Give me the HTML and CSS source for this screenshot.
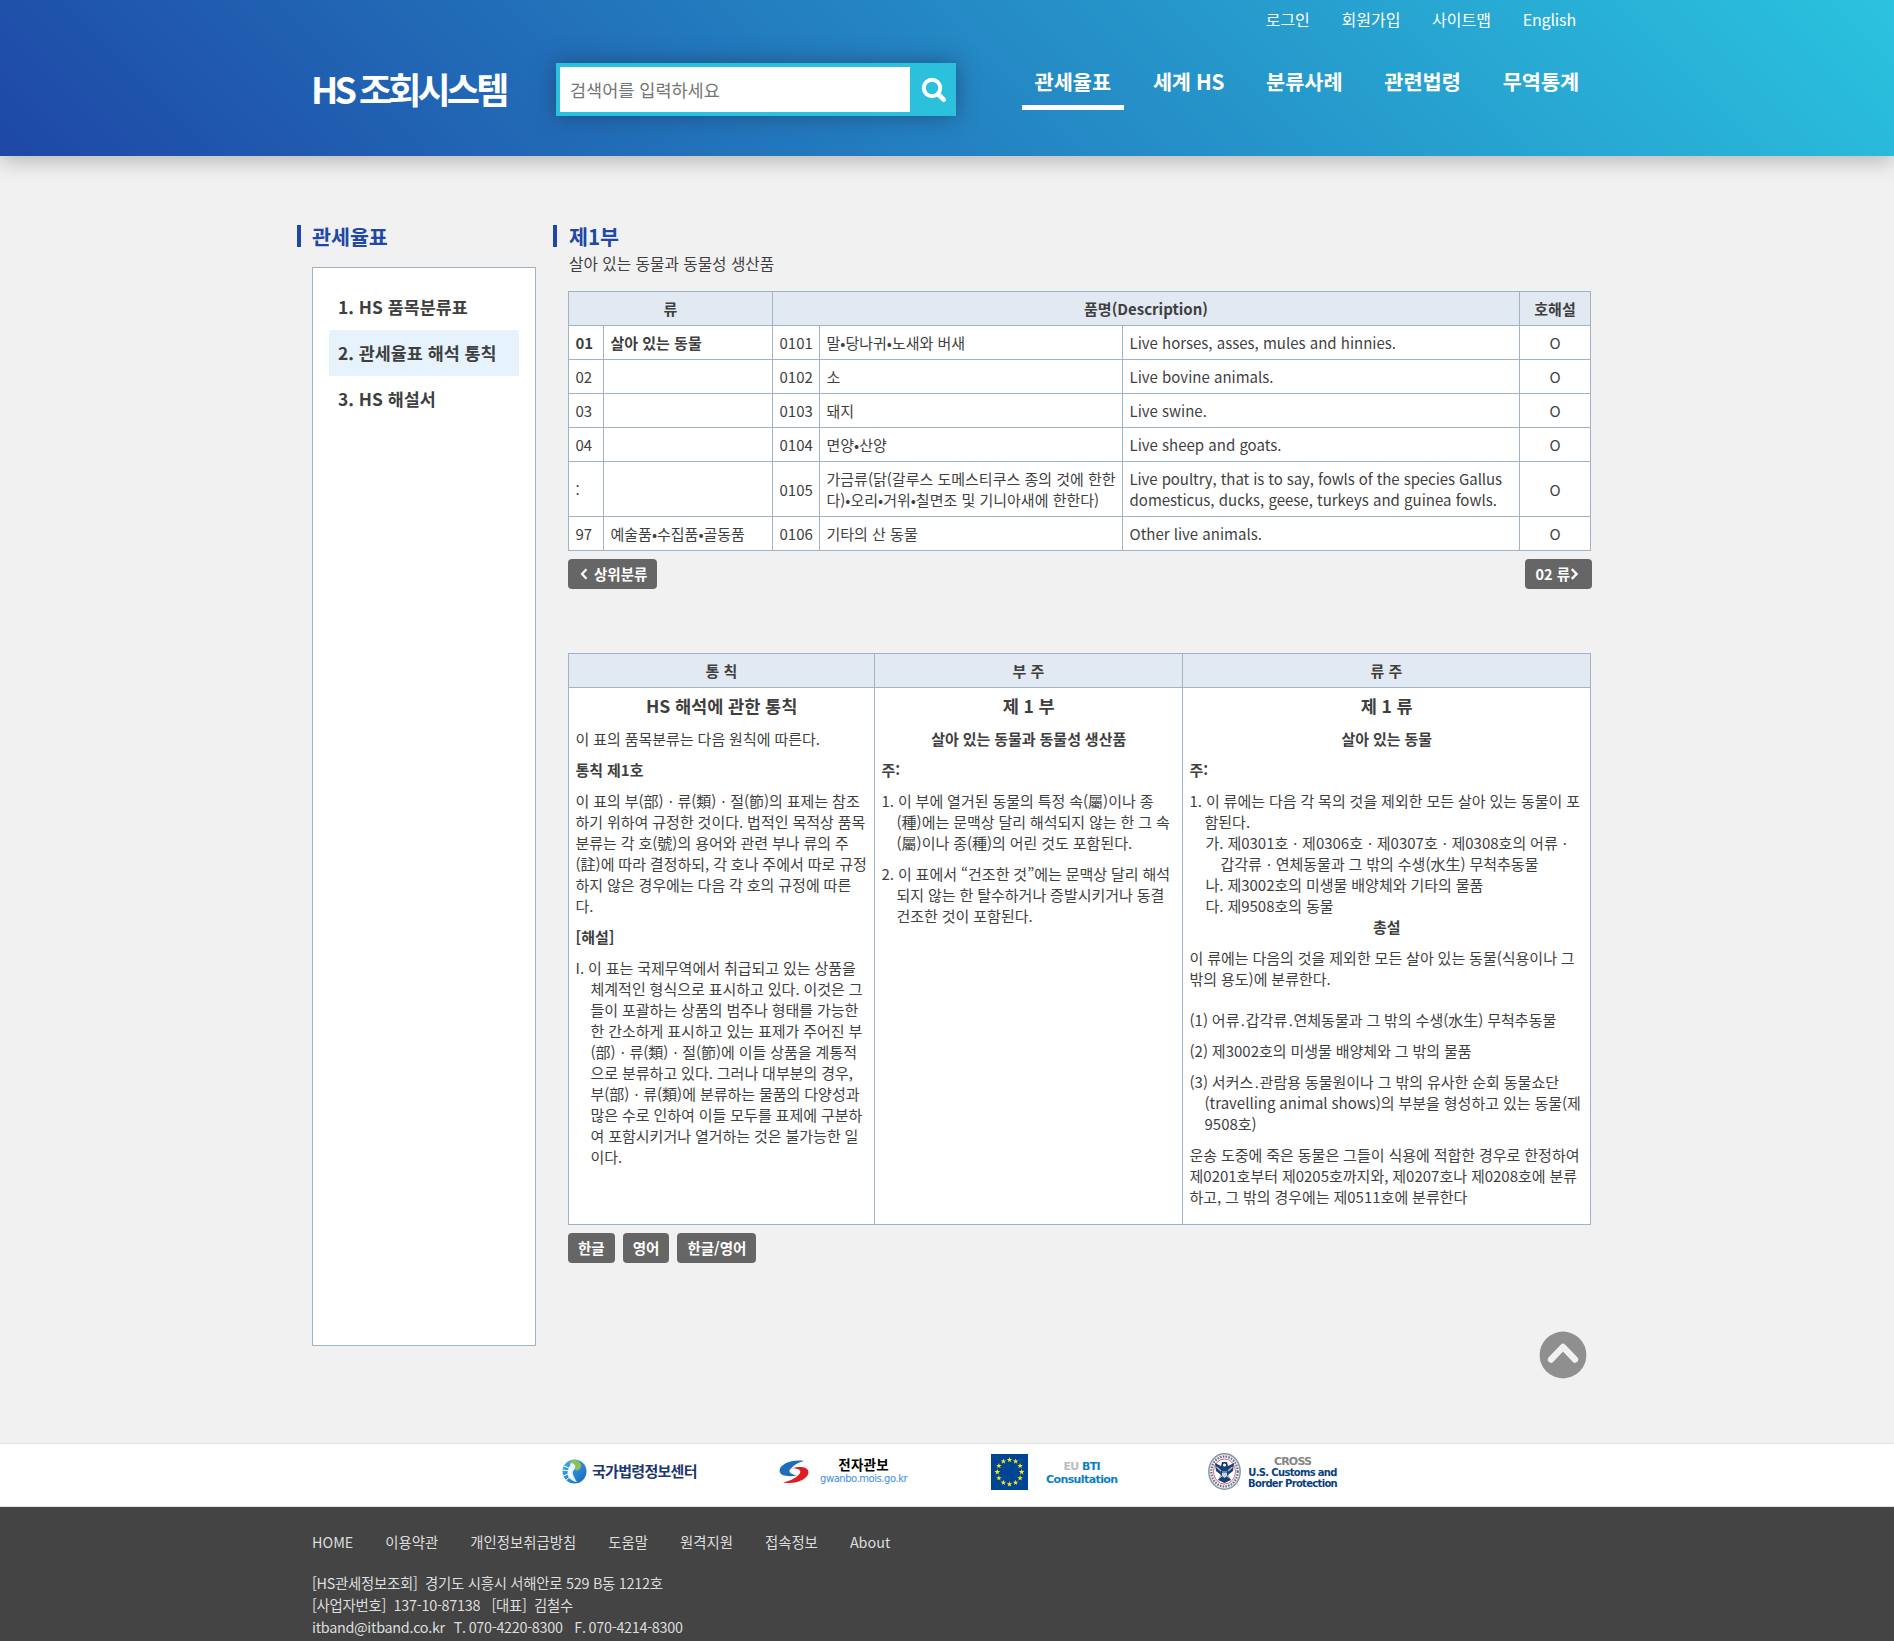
FILE: index.html
```html
<!DOCTYPE html>
<html lang="ko">
<head>
<meta charset="utf-8">
<title>HS 조회시스템</title>
<link rel="stylesheet" href="styles.css">
</head>
<body>
<header class="header">
  <div class="logo">HS 조회시스템</div>
  <form class="search">
    <input class="search-input" type="text" placeholder="검색어를 입력하세요">
    <button class="search-btn" type="button" aria-label="검색">
      <svg width="26" height="26" viewBox="0 0 26 26"><circle cx="11" cy="11" r="8.2" fill="none" stroke="#fff" stroke-width="4"/><path d="M17.5 17.5L22.7 22.7" stroke="#fff" stroke-width="4.6" stroke-linecap="round"/></svg>
    </button>
  </form>
  <div class="menus">
    <nav class="util"><a>로그인</a><a>회원가입</a><a>사이트맵</a><a>English</a></nav>
    <nav class="gnb"><a class="on">관세율표</a><a>세계 HS</a><a>분류사례</a><a>관련법령</a><a>무역통계</a></nav>
  </div>
</header>

<main class="main">
  <aside class="side">
    <h2 class="title">관세율표</h2>
    <ul class="side-menu">
      <li>1. HS 품목분류표</li>
      <li class="on">2. 관세율표 해석 통칙</li>
      <li>3. HS 해설서</li>
    </ul>
  </aside>
  <section class="content">
    <h2 class="title">제1부</h2>
    <p class="subtitle">살아 있는 동물과 동물성 생산품</p>
    <table class="grid list">
      <colgroup><col class="c1"><col class="c2"><col class="c3"><col class="c4"><col class="c5"><col class="c6"></colgroup>
      <tr><th colspan="2">류</th><th colspan="3">품명(Description)</th><th>호해설</th></tr>
      <tr><td><b>01</b></td><td><b>살아 있는 동물</b></td><td>0101</td><td>말•당나귀•노새와 버새</td><td>Live horses, asses, mules and hinnies.</td><td class="o">O</td></tr>
      <tr><td>02</td><td></td><td>0102</td><td>소</td><td>Live bovine animals.</td><td class="o">O</td></tr>
      <tr><td>03</td><td></td><td>0103</td><td>돼지</td><td>Live swine.</td><td class="o">O</td></tr>
      <tr><td>04</td><td></td><td>0104</td><td>면양•산양</td><td>Live sheep and goats.</td><td class="o">O</td></tr>
      <tr><td>:</td><td></td><td>0105</td><td>가금류(닭(갈루스 도메스티쿠스 종의 것에 한한<br>다)•오리•거위•칠면조 및 기니아새에 한한다)</td><td><span class="tight">Live poultry, that is to say, fowls of the species Gallus</span><br>domesticus, ducks, geese, turkeys and guinea fowls.</td><td class="o">O</td></tr>
      <tr><td>97</td><td>예술품•수집품•골동품</td><td>0106</td><td>기타의 산 동물</td><td>Other live animals.</td><td class="o">O</td></tr>
    </table>
    <div class="pager">
      <a class="btn prev"><svg width="8" height="12" viewBox="0 0 8 12"><path d="M6.5 1.2L2 6L6.5 10.8" fill="none" stroke="#fff" stroke-width="2.2"/></svg>상위분류</a>
      <a class="btn next">02 류<svg width="9" height="12" viewBox="0 0 9 12"><path d="M1.8 1.2L6.6 6L1.8 10.8" fill="none" stroke="#fff" stroke-width="2.4"/></svg></a>
    </div>
    <table class="grid notes">
      <colgroup><col class="n1"><col class="n2"><col class="n3"></colgroup>
      <tr><th>통 칙</th><th>부 주</th><th>류 주</th></tr>
      <tr class="body">
        <td>
          <h4>HS 해석에 관한 통칙</h4>
          <p>이 표의 품목분류는 다음 원칙에 따른다.</p>
          <p><b>통칙 제1호</b></p>
          <p>이 표의 부(部)ㆍ류(類)ㆍ절(節)의 표제는 참조<br>하기 위하여 규정한 것이다. 법적인 목적상 품목<br>분류는 각 호(號)의 용어와 관련 부나 류의 주<br>(註)에 따라 결정하되, 각 호나 주에서 따로 규정<br>하지 않은 경우에는 다음 각 호의 규정에 따른<br>다.</p>
          <p><b>[해설]</b></p>
          <p class="hang">I. 이 표는 국제무역에서 취급되고 있는 상품을<br>체계적인 형식으로 표시하고 있다. 이것은 그<br>들이 포괄하는 상품의 범주나 형태를 가능한<br>한 간소하게 표시하고 있는 표제가 주어진 부<br>(部)ㆍ류(類)ㆍ절(節)에 이들 상품을 계통적<br>으로 분류하고 있다. 그러나 대부분의 경우,<br>부(部)ㆍ류(類)에 분류하는 물품의 다양성과<br>많은 수로 인하여 이들 모두를 표제에 구분하<br>여 포함시키거나 열거하는 것은 불가능한 일<br>이다.</p>
        </td>
        <td>
          <h4>제 1 부</h4>
          <p class="center"><b>살아 있는 동물과 동물성 생산품</b></p>
          <p><b>주:</b></p>
          <p class="hang">1. 이 부에 열거된 동물의 특정 속(屬)이나 종<br>(種)에는 문맥상 달리 해석되지 않는 한 그 속<br>(屬)이나 종(種)의 어린 것도 포함된다.</p>
          <p class="hang">2. 이 표에서 “건조한 것”에는 문맥상 달리 해석<br>되지 않는 한 탈수하거나 증발시키거나 동결<br>건조한 것이 포함된다.</p>
        </td>
        <td>
          <h4>제 1 류</h4>
          <p class="center"><b>살아 있는 동물</b></p>
          <p><b>주:</b></p>
          <div class="hang">1. 이 류에는 다음 각 목의 것을 제외한 모든 살아 있는 동물이 포<br>함된다.</div>
          <div class="hang sub">가. 제0301호ㆍ제0306호ㆍ제0307호ㆍ제0308호의 어류ㆍ<br>갑각류ㆍ연체동물과 그 밖의 수생(水生) 무척추동물</div>
          <div class="hang sub">나. 제3002호의 미생물 배양체와 기타의 물품</div>
          <div class="hang sub">다. 제9508호의 동물</div>
          <p class="center"><b>총설</b></p>
          <p class="wide">이 류에는 다음의 것을 제외한 모든 살아 있는 동물(식용이나 그<br>밖의 용도)에 분류한다.</p>
          <p>(1) 어류<span class="dot">․</span>갑각류<span class="dot">․</span>연체동물과 그 밖의 수생(水生) 무척추동물</p>
          <p>(2) 제3002호의 미생물 배양체와 그 밖의 물품</p>
          <p class="hang">(3) 서커스<span class="dot">․</span>관람용 동물원이나 그 밖의 유사한 순회 동물쇼단<br>(travelling animal shows)의 부분을 형성하고 있는 동물(제<br>9508호)</p>
          <p>운송 도중에 죽은 동물은 그들이 식용에 적합한 경우로 한정하여<br>제0201호부터 제0205호까지와, 제0207호나 제0208호에 분류<br>하고, 그 밖의 경우에는 제0511호에 분류한다</p>
        </td>
      </tr>
    </table>
    <div class="langs"><a class="btn">한글</a><a class="btn">영어</a><a class="btn">한글/영어</a></div>
    <a class="top" aria-label="위로"><svg width="48" height="48" viewBox="0 0 48 48"><circle cx="24" cy="24" r="23.4" fill="#8f8f8f"/><path d="M12 28.5L24 16L36 28.5" fill="none" stroke="#f1f1f1" stroke-width="6.4" stroke-linecap="round" stroke-linejoin="round"/></svg></a>
  </section>
</main>

<section class="links">
  <a class="link law">
    <svg width="25" height="25" viewBox="0 0 25 25"><defs><linearGradient id="g1" x1="0" y1="0" x2="1" y2="1"><stop offset="0" stop-color="#43b4ee"/><stop offset="1" stop-color="#1463bd"/></linearGradient></defs><circle cx="12.5" cy="12.5" r="12" fill="url(#g1)"/><path d="M8 2C14-1 20 3 19 8C18 11 15 12 13 11C15 7 12 4 8 5Z" fill="#8cc152"/><path d="M9 4C13 4 15 8 12 11C9 13 12 18 15 23C8 22 4 17 6 11Z" fill="#e6f5fb"/><path d="M0 11L9 12M1 17L9 14M4 21L10 16M2 7L9 10" stroke="#fff" stroke-width="1"/></svg>
    <span>국가법령정보센터</span>
  </a>
  <a class="link gwanbo">
    <svg width="30" height="24" viewBox="0 0 30 24"><path d="M25 1C12-1 0 5 .5 11C1 16 9 17 18 15.500C10 14 9 11 12 8.500C15 5 19 2.500 25 1Z" fill="#1c6fb8"/><path d="M4 22.500C17 25 29.500 19 29.500 12C29 7 22 6 13 8.200C21 8.500 23 11 20 14.500C16 19 10 21 4 22.500Z" fill="#df1b25"/></svg>
    <span><b>전자관보</b><i>gwanbo.mois.go.kr</i></span>
  </a>
  <a class="link eu">
    <svg width="37" height="36" viewBox="0 0 37 36"><defs><path id="st" d="M0-2.900L.7-.9L2.800-.9L1.100.4L1.700 2.400L0 1.200L-1.700 2.400L-1.100.4L-2.800-.9L-.7-.9Z" fill="#f7e823"/></defs><rect width="37" height="36" fill="#004494"/><g transform="translate(18.500 18)"><use href="#st" y="-12.200"/><use href="#st" x="6.100" y="-10.600"/><use href="#st" x="10.600" y="-6.100"/><use href="#st" x="12.200"/><use href="#st" x="10.600" y="6.100"/><use href="#st" x="6.100" y="10.600"/><use href="#st" y="12.200"/><use href="#st" x="-6.100" y="10.600"/><use href="#st" x="-10.600" y="6.100"/><use href="#st" x="-12.200"/><use href="#st" x="-10.600" y="-6.100"/><use href="#st" x="-6.100" y="-10.600"/></g></svg>
    <span><em>EU</em> BTI<br>Consultation</span>
  </a>
  <a class="link cbp">
    <svg width="33" height="37" viewBox="0 0 33 37"><ellipse cx="16.500" cy="18.500" rx="15.700" ry="17.700" fill="#eef0f3" stroke="#8c929b" stroke-width="1.400"/><ellipse cx="16.500" cy="18.500" rx="13.200" ry="15" fill="none" stroke="#5b7190" stroke-width="2.200" stroke-dasharray="1.500 1.300"/><ellipse cx="16.500" cy="18.500" rx="11" ry="12.500" fill="#fff" stroke="#d96a70" stroke-width="1"/><path d="M7 10L13 13L14 9H19L20 13L26 10L25 18L20 22L23 27L16.500 30L10 27L13 22L8 18Z" fill="#1d3f73"/><path d="M8.500 14L13 18M24.500 14L20 18M11 25L14 23M22 25L19 23" stroke="#b9c8dc" stroke-width="1.200"/><path d="M14 18H19V23L16.500 25L14 23Z" fill="#c5d8d1"/><path d="M14 19H19" stroke="#2f7ca8" stroke-width="1.500"/><circle cx="16.500" cy="12" r="1.500" fill="#fff"/></svg>
    <span><em>CROSS</em><br>U.S. Customs and<br>Border Protection</span>
  </a>
</section>

<footer class="footer">
  <nav class="fnav"><a>HOME</a><a>이용약관</a><a>개인정보취급방침</a><a>도움말</a><a>원격지원</a><a>접속정보</a><a>About</a></nav>
  <address>[HS관세정보조회]&nbsp; 경기도 시흥시 서해안로 529 B동 1212호<br>[사업자번호]&nbsp; 137-10-87138 &nbsp; [대표]&nbsp; 김철수<br><span class="contact">itband@itband.co.kr &nbsp; T. 070-4220-8300 &nbsp;&nbsp; F. 070-4214-8300</span></address>
</footer>
</body>
</html>
```
FILE: styles.css
```css
* { box-sizing: border-box; }
body {
  margin: 0;
  height: 1641px;
  overflow: hidden;
  background: #f1f1f1;
  color: #3f3f3f;
  font: 15px/21px "Noto Sans CJK KR", sans-serif;
}
h2, h4, p, ul { margin: 0; padding: 0; }
svg { display: block; }
b { font-weight: 700; }

.header {
  display: flex;
  height: 156px;
  padding-left: 311px;
  background: linear-gradient(45deg, #1e47a6, #2ac3df);
  box-shadow: 0 5px 20px rgba(0, 0, 0, .25);
  color: #fff;
}
.logo {
  width: 245px;
  padding-top: 66px;
  font-size: 36px;
  line-height: 44px;
  font-weight: 700;
  letter-spacing: -3.800px;
  word-spacing: -.5px;
  white-space: nowrap;
}
.search {
  display: flex;
  width: 400px;
  height: 53px;
  margin-top: 63px;
  padding: 4px;
  background: #2bc1dd;
  box-shadow: 0 0 22px rgba(30, 50, 90, .6);
}
.search-input {
  width: 350px;
  height: 45px;
  padding: 0 10px;
  border: 0;
  background: #fff;
  font: 17.500px "Noto Sans CJK KR", sans-serif;
}
.search-input::placeholder { color: #757575; }
.search-btn {
  flex: 1;
  padding: 0 0 0 11px;
  border: 0;
  background: none;
}
.menus { width: 636px; }
.util {
  display: flex;
  justify-content: flex-end;
  gap: 31.700px;
  padding: 7px 16px 0 0;
  font-size: 16px;
  line-height: 24px;
}
.util a:last-child { letter-spacing: -.15px; }
.gnb {
  display: flex;
  justify-content: flex-end;
  gap: 16.200px;
  padding-top: 34px;
  font-size: 20.800px;
  line-height: 32px;
  font-weight: 700;
}
.gnb a { padding: 0 12.800px 8px; border-bottom: 5px solid transparent; }
.gnb a:nth-child(2) { letter-spacing: -.3px; }
.gnb .on { border-color: #fff; }

.main {
  display: flex;
  gap: 33px;
  height: 1287px;
  padding: 65px 302px 0 311px;
}
.title {
  display: flex;
  height: 30px;
  align-items: center;
  margin-left: -14px;
  color: #1e47a6;
  font-size: 20.600px;
  font-weight: 700;
}
.title::before {
  content: "";
  width: 4px;
  height: 22px;
  margin-right: 11px;
  background: #1e47a6;
}
.side { width: 225px; }
.side-menu {
  height: 1079px;
  margin: 16px 0 0 1px;
  padding: 16px;
  border: 1px solid #9fb3c4;
  background: #fff;
  list-style: none;
  font-size: 17.400px;
  font-weight: 700;
}
.side-menu li { height: 46px; padding: 0 9px; line-height: 45px; white-space: nowrap; }
.side-menu .on { background: #e6f3fd; }
.content { width: 1023px; margin-left: -1px; }
.content .title { margin-left: -15px; }
.content .title::before { margin-right: 12px; }
.subtitle { height: 40px; padding-left: 1px; font-size: 15.700px; line-height: 25px; }

.grid { border-collapse: collapse; table-layout: fixed; width: 1023px; background: #fff; }
.grid th, .grid td { border: 1px solid #9fb3c4; padding: 6px; text-align: left; white-space: nowrap; }
.grid td { padding-left: 6.500px; padding-right: 0; }
.grid th { background: #e2e9f3; text-align: center; font-weight: 700; }
.grid .o { padding: 6px; text-align: center; }
.list td { height: 34px; }
.tight { letter-spacing: -.08px; }
.c1 { width: 35px; }
.c2 { width: 169px; }
.c3 { width: 47px; }
.c4 { width: 303px; }
.c5 { width: 397px; }
.n1 { width: 306px; }
.n2 { width: 308px; }

.pager { display: flex; justify-content: space-between; margin: 8px -1px 64px 0; }
.btn {
  display: flex;
  align-items: center;
  height: 30px;
  padding: 0 10px 1px;
  border-radius: 4px;
  background: #666;
  color: #fff;
  font-size: 14.500px;
  font-weight: 700;
}
.btn.prev { gap: 6px; padding-left: 12px; }
.btn.next { padding-right: 13px; }
.langs { display: flex; gap: 8px; margin-top: 8px; }

.notes .body td { height: 537px; vertical-align: top; word-spacing: -.3px; }
.notes p { margin-bottom: 10px; }
.notes h4 { margin: 1px 0 12px; padding-right: 6px; font-size: 17.600px; line-height: 21px; text-align: center; font-weight: 700; }
.notes .center { padding-right: 6px; text-align: center; }
.notes .wide { margin-bottom: 20px; }
.hang { padding-left: 15px; text-indent: -15px; }
.hang.sub { padding-left: 31px; }
.dot { letter-spacing: -1.700px; }
.top { display: block; width: 48px; margin: 68px 0 0 970.500px; }

.links {
  height: 64px;
  display: flex;
  padding-left: 562px;
  border-top: 1px solid #e4e4e4;
  border-bottom: 1px solid #e4e4e4;
  background: #fff;
}
.link { display: flex; flex: none; align-items: flex-start; white-space: nowrap; }
.law { width: 217px; padding-top: 15px; gap: 5px; color: #1b3770; font-size: 15px; font-weight: 700; letter-spacing: -.7px; line-height: 23px; }
.gwanbo { width: 212px; padding-top: 16px; gap: 11px; }
.gwanbo span { display: flex; flex-direction: column; align-items: center; margin-top: -4px; }
.gwanbo b { color: #000; font-size: 13.500px; line-height: 17px; letter-spacing: .3px; }
.gwanbo i { color: #3b8ee6; font: 10px/12px "DejaVu Sans", sans-serif; letter-spacing: -.450px; }
.eu { width: 217px; padding-top: 10px; gap: 18px; color: #0b7fc4; font: bold 11px/13px "DejaVu Sans", sans-serif; letter-spacing: -.6px; text-align: center; }
.eu span { padding-top: 6px; }
.eu em { color: #bcbcbc; font-style: normal; }
.cbp { padding-top: 9px; gap: 7px; color: #0a3f80; font: bold 10px/11px "DejaVu Sans", sans-serif; letter-spacing: -.680px; text-align: center; }
.cbp span { padding-top: 3px; }
.cbp em { color: #858585; font-size: 11px; font-style: normal; letter-spacing: -.8px; }

.footer { height: 134px; padding: 24px 0 0 312px; background: #444; color: #ddd; font-size: 14.400px; line-height: 22px; }
.fnav { display: flex; gap: 32px; }
.footer address { margin-top: 19px; font-style: normal; letter-spacing: -.270px; }
.contact { letter-spacing: -.3px; word-spacing: -.8px; }
```
